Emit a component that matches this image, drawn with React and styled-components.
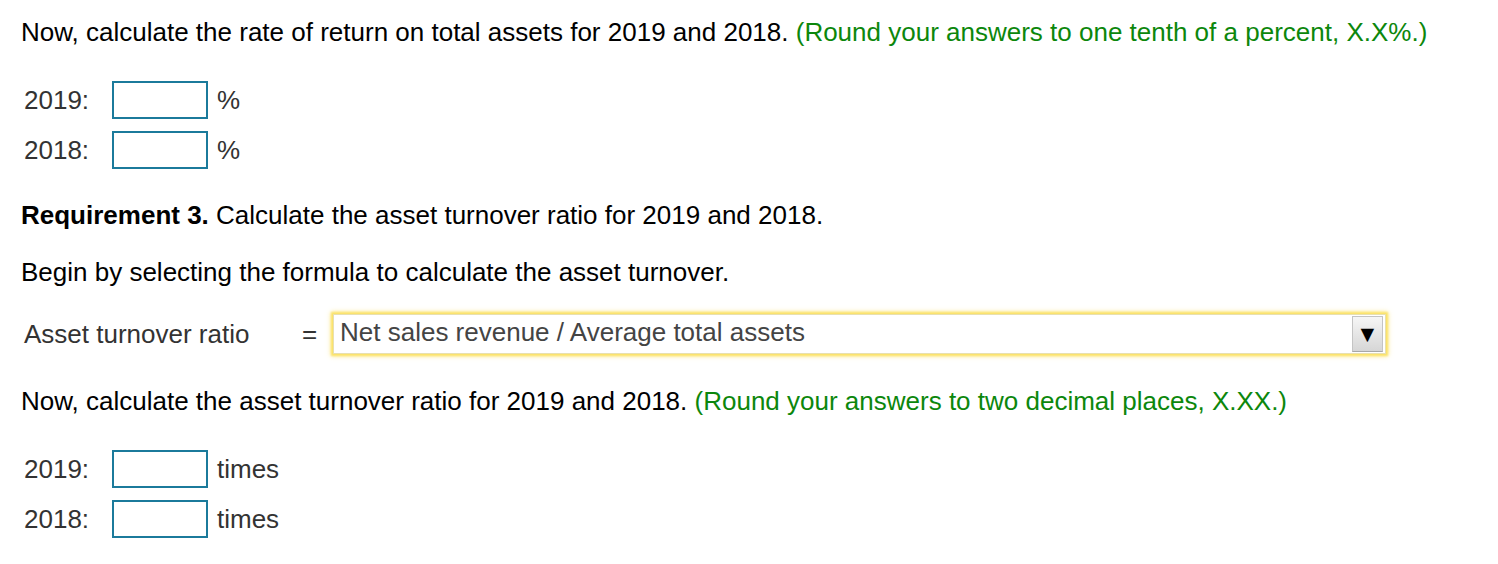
import React from "react";
import styled, { createGlobalStyle } from "styled-components";

const GlobalStyle = createGlobalStyle`
  html, body {
    margin: 0;
    padding: 0;
    background: #ffffff;
  }
  body {
    font-family: "Liberation Sans", Arial, sans-serif;
  }
`;

const Page = styled.div`
  padding: 17px 0 0 21px;
  width: 1498px;
  height: 564px;
  box-sizing: border-box;
  color: #000;
  font-size: 26px;
`;

const Para = styled.p`
  margin: 0;
  line-height: 30px;
  margin-bottom: ${({ $gap }) => $gap || 0}px;
`;

const Hint = styled.span`
  color: #0c870c;
`;

const AnswerRows = styled.div`
  display: flex;
  flex-direction: column;
  gap: 12px;
  padding-left: 3px;
  margin-bottom: ${({ $gap }) => $gap || 0}px;
`;

const AnswerRow = styled.div`
  display: flex;
  align-items: center;
  height: 38px;
  color: #333;
`;

const YearLabel = styled.span`
  width: 88px;
`;

const Box = styled.input`
  width: 96px;
  height: 38px;
  box-sizing: border-box;
  border: 2px solid #1b7a9b;
  border-radius: 0;
  padding: 0 4px;
  margin: 0;
  font: inherit;
  outline: none;
`;

const Unit = styled.span`
  margin-left: 9px;
`;

const FormulaRow = styled.div`
  display: flex;
  align-items: center;
  padding-left: 3px;
  margin-bottom: 32px;
  color: #333;
`;

const FormulaLabel = styled.span`
  width: 278px;
`;

const Equals = styled.span`
  width: 31px;
`;

const Select = styled.div`
  display: flex;
  align-items: stretch;
  width: 1053px;
  height: 40px;
  box-sizing: border-box;
  border: 1px solid #e8e0b0;
  background: #fff;
  box-shadow: 0 0 2px 2px #fbe36a, 0 0 5px 2px rgba(251, 222, 80, 0.6);
`;

const SelectText = styled.span`
  flex: 1;
  padding-left: 6px;
  line-height: 34px;
  color: #444;
`;

const Arrow = styled.span`
  width: 31px;
  margin: 1px 2px 1px 0;
  display: flex;
  align-items: center;
  justify-content: center;
  background: linear-gradient(#f6f6f6, #d6d6d6);
  border: 1px solid #c4c4c4;
  border-bottom-color: #a8a8a8;
  box-sizing: border-box;
  font-size: 23px;
  color: #000;
`;

const Bold = styled.b`
  font-weight: 700;
`;

const App = () => (
  <>
    <GlobalStyle />
    <Page>
      <Para $gap={34}>
        Now, calculate the rate of return on total assets for 2019 and 2018.{" "}
        <Hint>(Round your answers to one tenth of a percent, X.X%.)</Hint>
      </Para>
      <AnswerRows $gap={31}>
        <AnswerRow>
          <YearLabel>2019:</YearLabel>
          <Box />
          <Unit>%</Unit>
        </AnswerRow>
        <AnswerRow>
          <YearLabel>2018:</YearLabel>
          <Box />
          <Unit>%</Unit>
        </AnswerRow>
      </AnswerRows>
      <Para $gap={27}>
        <Bold>Requirement 3.</Bold> Calculate the asset turnover ratio for 2019 and 2018.
      </Para>
      <Para $gap={27}>Begin by selecting the formula to calculate the asset turnover.</Para>
      <FormulaRow>
        <FormulaLabel>Asset turnover ratio</FormulaLabel>
        <Equals>=</Equals>
        <Select>
          <SelectText>Net sales revenue / Average total assets</SelectText>
          <Arrow>▼</Arrow>
        </Select>
      </FormulaRow>
      <Para $gap={34}>
        Now, calculate the asset turnover ratio for 2019 and 2018.{" "}
        <Hint>(Round your answers to two decimal places, X.XX.)</Hint>
      </Para>
      <AnswerRows>
        <AnswerRow>
          <YearLabel>2019:</YearLabel>
          <Box />
          <Unit>times</Unit>
        </AnswerRow>
        <AnswerRow>
          <YearLabel>2018:</YearLabel>
          <Box />
          <Unit>times</Unit>
        </AnswerRow>
      </AnswerRows>
    </Page>
  </>
);

export default App;
